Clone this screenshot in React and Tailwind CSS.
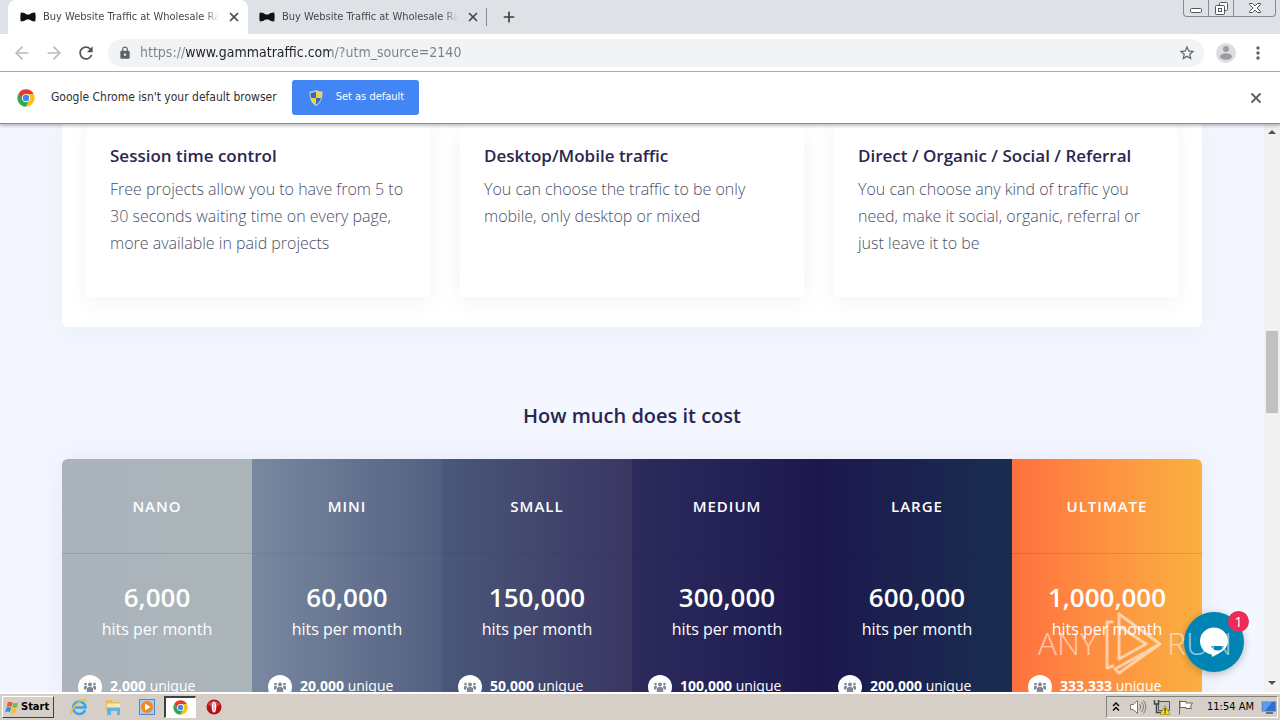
import { ArrowLeft, ArrowRight, Plus, X } from 'lucide-react'
import { MdLock, MdMoreVert, MdRefresh, MdStarBorder } from 'react-icons/md'

const features = [
  { title: 'Session time control', text: 'Free projects allow you to have from 5 to 30 seconds waiting time on every page, more available in paid projects' },
  { title: 'Desktop/Mobile traffic', text: 'You can choose the traffic to be only mobile, only desktop or mixed' },
  { title: 'Direct / Organic / Social / Referral', text: 'You can choose any kind of traffic you need, make it social, organic, referral or just leave it to be' },
]

const plans = [
  { name: 'NANO', hits: '6,000', unique: '2,000', bg: 'from-[#aab3bb] to-[#abb5b9]', line: 'border-black/10' },
  { name: 'MINI', hits: '60,000', unique: '20,000', bg: 'from-[#7989a0] to-[#535f81]', line: 'border-black/5' },
  { name: 'SMALL', hits: '150,000', unique: '50,000', bg: 'from-[#4a5879] to-[#3a3663]', line: 'border-black/5' },
  { name: 'MEDIUM', hits: '300,000', unique: '100,000', bg: 'from-[#2d2b5c] to-[#1c184f]', line: 'border-black/5' },
  { name: 'LARGE', hits: '600,000', unique: '200,000', bg: 'from-[#1c184e] to-[#192d50]', line: 'border-black/5' },
  { name: 'ULTIMATE', hits: '1,000,000', unique: '333,333', bg: 'from-[#ff7040] to-[#fab040]', line: 'border-black/10' },
]

const tabs = ['first', 'second']

function BowTie() {
  return (
    <svg className="h-4 w-4 shrink-0" viewBox="0 0 16 16" aria-hidden="true">
      <path d="M.8 3.500c2.200-.2 4.500.8 5.700 2h3c1.200-1.200 3.500-2.200 5.700-2 .6 3 .6 6 0 9-2.200 0-4.500-.9-5.700-2h-3c-1.200 1.100-3.500 2-5.700 2-.6-3-.6-6 0-9z" fill="#111" />
    </svg>
  )
}

function ChromeLogo({ className }) {
  return (
    <svg className={className} viewBox="0 0 48 48" aria-hidden="true">
      <circle cx="24" cy="24" r="23" fill="#fff" />
      <path d="M24 13h20.300A23 23 0 0 0 4.100 12.500l9.900 17z" fill="#e33b2e" />
      <path d="M33.500 29.500 23.500 47A23 23 0 0 0 44.300 13H24z" fill="#fbc116" />
      <path d="M14.500 29.500 4.100 12.500A23 23 0 0 0 23.500 47l10-17.500z" fill="#2da94f" />
      <circle cx="24" cy="24" r="11" fill="#fff" />
      <circle cx="24" cy="24" r="8.500" fill="#4285f4" />
    </svg>
  )
}

function Shield() {
  return (
    <svg className="h-4 w-4" viewBox="0 0 16 16" aria-hidden="true">
      <path d="M8 0c2 1.200 4 1.700 6.500 1.700 0 6.300-1.500 11-6.500 14.300C3 12.700 1.500 8 1.500 1.700 4 1.700 6 1.200 8 0z" fill="#d8d9c0" />
      <path d="M8 1.500v6.500H3C2.700 6.500 2.500 5 2.500 2.800 4.500 2.800 6.500 2.300 8 1.500z" fill="#2f6cc0" />
      <path d="M8 1.500v6.500h5c.3-1.500.5-3 .5-5.200C11.500 2.800 9.500 2.300 8 1.500z" fill="#f7d038" />
      <path d="M8 8v6.800C5.500 13.200 3.700 10.800 3 8z" fill="#f7d038" />
      <path d="M8 8v6.800c2.500-1.600 4.300-4 5-6.800z" fill="#2f6cc0" />
    </svg>
  )
}

function People() {
  return (
    <svg className="h-3.5 w-3.5" viewBox="0 0 14 14" fill="#7d8795" aria-hidden="true">
      <circle cx="7" cy="4.500" r="2" />
      <circle cx="2.500" cy="4" r="1.300" />
      <circle cx="11.500" cy="4" r="1.300" />
      <path d="M3.800 12V9c0-1.500 1.200-2 3.200-2s3.200.5 3.200 2v3zM1 9.500V7c0-1 .8-1.300 2.500-1.200L4 7l-1 2.500zM13 9.500V7c0-1-.8-1.300-2.500-1.200L10 7l1 2.500z" />
    </svg>
  )
}

function TabStrip() {
  return (
    <div className="flex h-[34px] shrink-0 bg-[#dee1e6] pl-2 text-[11px] text-[#45494d]">
      {tabs.map((tab, i) => (
        <div key={tab} className={`flex h-full items-center pl-3 ${i === 0 ? 'w-60 rounded-t-lg bg-white' : 'w-[239px] pl-[11px]'}`}>
          <BowTie />
          <span className="ml-[7px] w-44 overflow-hidden whitespace-nowrap mask-r-from-92%">Buy Website Traffic at Wholesale Rates</span>
          <button aria-label="Close tab" className="ml-1 p-1"><X className="h-3.5 w-3.5" strokeWidth={3} /></button>
        </div>
      ))}
      <div className="my-2 -ml-px w-px bg-[#858a90]" />
      <button aria-label="New tab" className="px-3.5 text-[#3c4043]"><Plus className="h-4 w-4" strokeWidth={2.500} /></button>
      <div className="ml-auto mr-1 flex h-[17px] w-[93px] divide-x divide-[#878c94] rounded-b border border-t-0 border-[#878c94] text-[#50555c]">
        <button aria-label="Minimize" className="flex w-[25px] items-end justify-center pb-[3px]">
          <svg className="h-[5px] w-3" viewBox="0 0 12 5"><rect x=".5" y=".5" width="11" height="4" rx="1" fill="#fff" stroke="currentColor" /></svg>
        </button>
        <button aria-label="Restore" className="flex w-[25px] items-end justify-center pb-px">
          <svg className="h-[13px] w-[13px]" viewBox="0 0 13 13" fill="#fff" stroke="currentColor">
            <rect x="4.500" y=".5" width="8" height="8" rx="1" />
            <rect x=".5" y="3.500" width="9" height="9" rx="1" />
            <rect x="3.500" y="6.500" width="3" height="3" />
          </svg>
        </button>
        <button aria-label="Close window" className="flex flex-1 items-end justify-center pb-[3px]">
          <svg className="h-[10px] w-3" viewBox="0 0 12 10">
            <path d="M.5.5h3L6 3 8.500.5h3v1L8 5l3.500 3.500v1h-3L6 7 3.500 9.500h-3v-1L4 5 .5 1.500z" fill="#fff" stroke="currentColor" />
          </svg>
        </button>
      </div>
    </div>
  )
}

function Toolbar() {
  return (
    <div className="flex h-[38px] shrink-0 items-center border-b border-[#a9abad] bg-white px-3 text-[#5f6368]">
      <button aria-label="Back" className="text-[#b8babd]"><ArrowLeft className="h-5 w-5" strokeWidth={2} /></button>
      <button aria-label="Forward" className="ml-3 text-[#b8babd]"><ArrowRight className="h-5 w-5" strokeWidth={2} /></button>
      <button aria-label="Reload" className="ml-3 text-[#505357]"><MdRefresh className="h-5 w-5" /></button>
      <div className="ml-3 flex h-7 flex-1 items-center rounded-full bg-[#f1f3f4] pl-2.5 pr-2">
        <MdLock className="h-3.5 w-3.5 shrink-0" />
        <input
          aria-label="Address"
          defaultValue="https://www.gammatraffic.com/?utm_source=2140"
          className="ml-2 min-w-0 flex-1 bg-[linear-gradient(90deg,#7d8085_46px,#202124_46px,#202124_191px,#7d8085_191px)] bg-clip-text pb-0.5 text-sm text-transparent outline-none"
        />
        <button aria-label="Bookmark"><MdStarBorder className="h-[18px] w-[18px]" /></button>
      </div>
      <button aria-label="Profile" className="ml-3">
        <svg className="h-5 w-5" viewBox="0 0 20 20">
          <circle cx="10" cy="10" r="10" fill="#dcdddf" />
          <circle cx="10" cy="6" r="3" fill="#9a9c9f" />
          <ellipse cx="10" cy="13.500" rx="6" ry="3.200" fill="#9a9c9f" />
        </svg>
      </button>
      <button aria-label="Menu" className="ml-3"><MdMoreVert className="h-5 w-5" /></button>
    </div>
  )
}

function InfoBar() {
  return (
    <div className="relative z-10 flex h-[52px] shrink-0 items-center border-b border-[#8f8f8f] bg-white pl-[17px] pr-4 text-[#303030] shadow-[0_2px_3px_rgba(0,0,0,0.25)]">
      <ChromeLogo className="h-[18px] w-[18px]" />
      <p className="ml-4 pb-0.5 text-xs">Google Chrome isn't your default browser</p>
      <button className="ml-[15px] flex h-[35px] w-[127px] items-center gap-3 rounded-[3px] bg-[#4285f4] pl-4 text-[11px] text-white">
        <Shield />
        Set as default
      </button>
      <button aria-label="Dismiss" className="ml-auto text-[#5f6368]"><X className="h-4 w-4" strokeWidth={3} /></button>
    </div>
  )
}

function ChatButton() {
  return (
    <button aria-label="Open chat" className="absolute bottom-5 right-5 flex h-[60px] w-[60px] items-center justify-center rounded-full bg-[#0084b4] text-white shadow-[0_2px_8px_rgba(0,0,0,0.25)]">
      <svg className="h-8 w-8" viewBox="0 0 32 32" aria-hidden="true">
        <path d="M16 1.500a14 13.500 0 0 1 14 13.500c0 7-6 11.500-16 16l-.3-2.500A13.500 13.500 0 0 1 2 15 14 13.500 0 0 1 16 1.500z" fill="#fff" />
        <path d="M13 20h13c-1 3-3.500 4.500-6.500 4.500S14 23 13 20z" fill="#0084b4" />
      </svg>
      <span className="absolute -right-[5px] -top-px flex h-[21px] w-[21px] items-center justify-center rounded-full bg-[#ee2b54] text-sm">1</span>
    </button>
  )
}

function Watermark() {
  return (
    <div className="pointer-events-none absolute bottom-4 right-8 flex items-center gap-1 text-[32px] font-light text-white/55">
      <span>ANY</span>
      <svg className="h-[66px] w-[62px]" viewBox="0 0 62 66" fill="none" stroke="currentColor" strokeWidth="3" strokeLinejoin="round" strokeLinecap="round" aria-hidden="true">
        <path d="M11 12H6v46l6-2M18 13V4l41 30-41 29-4-4M18 13v36l27-15-27-18M14 59l45-25" />
      </svg>
      <span>RUN</span>
    </div>
  )
}

function Page() {
  return (
    <main className="relative min-w-0 flex-1 overflow-hidden bg-[#f4f7ff] font-['Open_Sans',sans-serif]">
      <div className="mx-auto w-full max-w-[1140px]">
        <section className="grid grid-cols-3 gap-[30px] rounded-b-md bg-white px-6 pb-[30px] shadow-[0_5px_30px_rgba(60,70,140,0.05)]">
          {features.map((f) => (
            <article key={f.title} className="rounded-b bg-white px-6 pb-10 pt-5 shadow-[0_5px_25px_rgba(0,0,0,0.05)]">
              <h3 className="text-[17px] font-semibold leading-6 text-[#2b2650]">{f.title}</h3>
              <p className="mt-2 text-base font-light leading-[27px] text-[#4a5068]">{f.text}</p>
            </article>
          ))}
        </section>

        <h2 className="mt-[73px] text-center text-xl font-semibold leading-8 text-[#2b2650]">How much does it cost</h2>

        <section className="mt-[27px] grid grid-cols-6 overflow-hidden rounded-t-md text-center text-white shadow-[0_0_30px_rgba(60,70,140,0.08)]">
          {plans.map((p) => (
            <article key={p.name} className={`bg-linear-to-r ${p.bg}`}>
              <h3 className={`border-b pb-[35px] pt-[35px] text-[15px] font-semibold leading-6 tracking-[1px] ${p.line}`}>{p.name}</h3>
              <p className="mt-[23px] text-[26px] font-semibold leading-10">{p.hits}</p>
              <p className="text-base leading-6">hits per month</p>
              <p className="mt-[30px] flex h-8 items-center gap-2 px-4 text-sm">
                <span className="flex h-6 w-6 items-center justify-center rounded-full bg-white"><People /></span>
                <span className="pb-0.5"><b>{p.unique}</b> unique</span>
              </p>
            </article>
          ))}
        </section>
      </div>
      <ChatButton />
      <Watermark />
    </main>
  )
}

function ScrollBar() {
  return (
    <div className="flex w-4 shrink-0 flex-col items-center bg-[#f1f1f1] text-[#505050]">
      <svg className="h-4 w-4" viewBox="0 0 16 16"><path d="M4 10l4-4 4 4z" fill="currentColor" /></svg>
      <div className="grow-[191]" />
      <div className="w-3 grow-[82] bg-[#c1c1c1]" />
      <div className="grow-[263]" />
      <svg className="h-4 w-4" viewBox="0 0 16 16"><path d="M4 5h8l-4 4z" fill="currentColor" /></svg>
    </div>
  )
}

function Taskbar() {
  return (
    <footer className="flex h-7 shrink-0 items-center border-t-2 border-white bg-[#d6cfc8] pl-0.5 text-[11px] text-black">
      <button className="flex h-[22px] w-[52px] items-center gap-px border border-b-[#404040] border-l-white border-r-[#404040] border-t-white pl-0.5 font-bold">
        <svg className="h-[15px] w-[15px] shrink-0" viewBox="0 0 16 16" aria-hidden="true">
          <path d="M3 2.500c2-1 3.500-.8 5 0L6.800 7.300c-1.500-.9-3-.9-5 0z" fill="#e9582b" />
          <path d="M8.700 2.800c1.800 1 3.500 1 5.300.1l-1.300 4.800c-1.700.8-3.500.8-5.200-.2z" fill="#7bb93c" />
          <path d="M1.500 8.200c2-.9 3.500-.8 5 .1l-1.300 4.600c-1.500-.9-3-.9-5 0z" fill="#3a8fd8" />
          <path d="M7.200 8.500c1.700 1 3.500 1 5.200.2l-1.300 4.700c-1.700.8-3.500.8-5.200-.2z" fill="#f6c12c" />
        </svg>
        Start
      </button>
      <button aria-label="Internet Explorer" className="ml-4 flex w-[18px] justify-center">
        <svg className="h-[18px] w-[18px]" viewBox="0 0 18 18" fill="none">
          <path d="M15 12c-1 2.500-3 4-5.500 4a6.200 6.200 0 1 1 6-6.500H5" stroke="#3aa5e0" strokeWidth="2.600" />
          <path d="M2 16c-2-2 2-8.500 7-12 4-2.800 8-3.500 7-.5" stroke="#f0c13a" strokeWidth="1.500" />
        </svg>
      </button>
      <button aria-label="Explorer" className="ml-4 flex w-[18px] justify-center">
        <svg className="h-[18px] w-[18px]" viewBox="0 0 18 18">
          <path d="M2 2h6l1 2h7v9H2z" fill="#e3bf5c" />
          <path d="M3 5.500h13v5H3z" fill="#fae9a8" />
          <path d="M3 9.500h13V17h-3v-4H7v4H3z" fill="#62b4e0" />
        </svg>
      </button>
      <button aria-label="Media Player" className="ml-4 flex w-[18px] justify-center">
        <svg className="h-[18px] w-[18px]" viewBox="0 0 18 18">
          <rect x="1.500" y="1.500" width="15" height="15" fill="#a7cdf0" stroke="#4d8ac9" />
          <circle cx="9" cy="9" r="6" fill="#f4851f" />
          <path d="M7 5.500 12.500 9 7 12.500z" fill="#fff" />
        </svg>
      </button>
      <button aria-label="Chrome" className="ml-2 flex h-[22px] w-8 items-center justify-center border-b border-l-2 border-r border-t-2 border-b-white border-l-[#404040] border-r-white border-t-[#404040] bg-white">
        <ChromeLogo className="h-[15px] w-[15px]" />
      </button>
      <button aria-label="Opera" className="ml-2.5 flex w-4 justify-center">
        <svg className="h-4 w-4" viewBox="0 0 16 16">
          <circle cx="8" cy="8" r="7.500" fill="#b51418" />
          <path d="M2 6a6.500 6 0 0 1 12 0c-3 1.500-9 1.500-12 0z" fill="#d8484a" />
          <ellipse cx="8" cy="8" rx="2.300" ry="5.500" fill="#fff" />
          <ellipse cx="8" cy="8" rx=".9" ry="4.200" fill="#e3b5b2" />
        </svg>
      </button>

      <div className="ml-auto mr-0.5 flex h-[22px] w-[172px] items-center border border-b-white border-l-[#85807a] border-r-white border-t-[#85807a] pl-1">
        <svg className="h-3 w-2.5" viewBox="0 0 10 12" fill="none" stroke="#000" strokeWidth="1.400" aria-hidden="true"><path d="M2 5l3-3 3 3M2 9.500l3-3 3 3" /></svg>
        <svg className="ml-2 h-[18px] w-[18px]" viewBox="0 0 18 18" fill="#fff" stroke="#777" aria-hidden="true">
          <path d="M1.500 6.500h3l4-4v13l-4-4h-3z" />
          <path d="M10.500 6c1.500 2 1.500 4 0 6M12.500 4c2.500 3 2.500 7 0 10M14.500 2.500c3 4 3 9 0 13" fill="none" />
        </svg>
        <svg className="ml-1.5 h-[18px] w-[18px]" viewBox="0 0 18 18" aria-hidden="true">
          <path d="M5.500 3.500h11v9h-11z" fill="#c5c9cf" stroke="#555" />
          <path d="M1.500 2v4h4V2M3.500 6v8.500h5" fill="none" stroke="#444" strokeWidth="1.500" />
          <path d="M12 7.500l5 9H7z" fill="#fbd729" stroke="#a58500" strokeWidth=".7" />
          <path d="M11.500 10h1.200v3.500h-1.200zM11.500 14.300h1.200v1.200h-1.200z" fill="#222" />
        </svg>
        <svg className="ml-1.5 h-[18px] w-[18px]" viewBox="0 0 18 18" fill="#fff" stroke="#666" aria-hidden="true">
          <path d="M2.500 2.500v14M3 3.500h6v1.500h6.500l-2 3 1 2.500H9V9.500H3z" />
        </svg>
        <time className="ml-3 whitespace-nowrap">11:54 AM</time>
        <svg className="ml-auto h-4 w-4 shrink-0" viewBox="0 0 16 16" aria-hidden="true">
          <rect x="1" y="2.500" width="14" height="10" fill="#2e6fd0" stroke="#8aa6c8" />
          <path d="M2 3h9L4 12H2z" fill="#5c9cf0" />
          <path d="M5 14h7" stroke="#456" strokeWidth="1.500" />
        </svg>
      </div>
    </footer>
  )
}

export default function App() {
  return (
    <div className="flex h-screen flex-col overflow-hidden font-['DejaVu_Sans_Condensed','DejaVu_Sans',sans-serif]">
      <TabStrip />
      <Toolbar />
      <InfoBar />
      <div className="flex min-h-0 flex-1">
        <Page />
        <ScrollBar />
      </div>
      <Taskbar />
    </div>
  )
}
